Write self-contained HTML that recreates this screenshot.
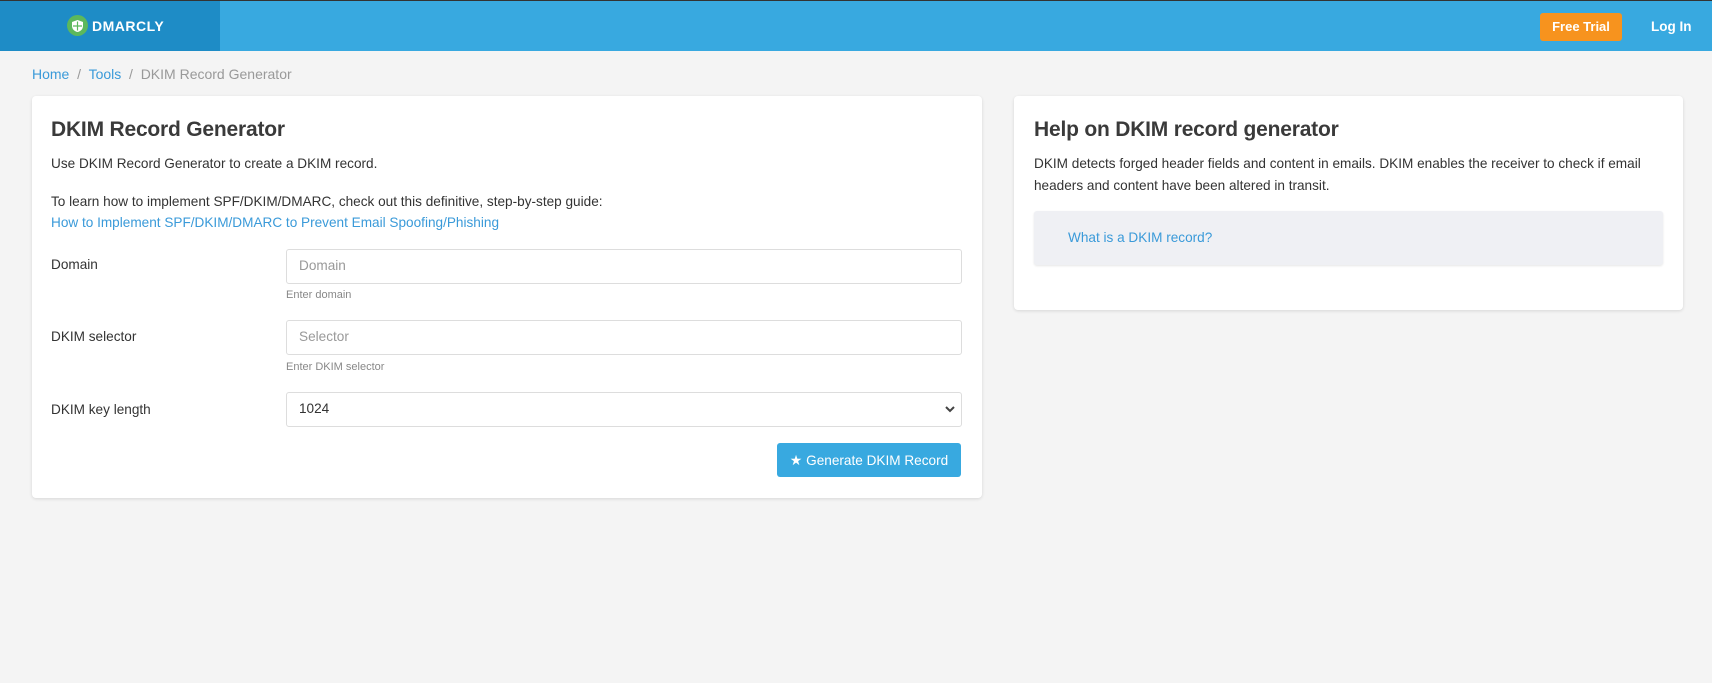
<!DOCTYPE html>
<html><head><meta charset="utf-8"><style>
*{box-sizing:border-box;margin:0;padding:0}
body{width:1712px;height:683px;background:#f4f4f4;font-family:"Liberation Sans",sans-serif;color:#333;position:relative;overflow:hidden}
.hdr{position:absolute;left:0;top:0;width:1712px;height:51px;background:#38a9e0;border-top:1px solid #333}
.hl{position:absolute;left:0;top:0;width:220px;height:50px;background:#1e8cc6}
.logo{position:absolute;left:67px;top:14px;display:flex;align-items:center;color:#fff;font-weight:bold;font-size:14px;letter-spacing:.5px}
.logo .c{width:21px;height:21px;border-radius:50%;background:#5cb85c;margin-right:4px;display:flex;align-items:center;justify-content:center}
.ft{position:absolute;left:1540px;top:12px;width:82px;height:28px;background:#f7931e;border-radius:3px;color:#fff;font-weight:bold;font-size:13px;text-align:center;line-height:28px}
.li{position:absolute;left:1651px;top:18px;color:#fff;font-weight:bold;font-size:13.5px}
.bc{position:absolute;left:32px;top:66px;font-size:14px;color:#999}
.bc a{color:#3a9ad9;text-decoration:none}
.card{position:absolute;background:#fff;border-radius:4px;box-shadow:0 1px 3px rgba(0,0,0,.12)}
h2{position:absolute;font-size:21px;font-weight:bold;color:#3a3a3a;letter-spacing:-0.2px}
.t{position:absolute;font-size:13.6px;color:#333;white-space:nowrap}
.lk{color:#3a9ad9}
.inp{position:absolute;left:254px;width:676px;height:35px;border:1px solid #ddd;border-radius:3px;font-size:13.6px;color:#999;padding:8px 12px}
.sm{position:absolute;left:254px;font-size:11px;color:#888}
.btn{position:absolute;left:745px;top:347px;width:184px;height:34px;background:#38a9e0;border-radius:3px;color:#fff;font-size:13.6px;line-height:34px;text-align:center}
.acc{position:absolute;left:20px;top:115px;width:629px;height:54px;background:#eff0f4;border-radius:3px;box-shadow:0 1px 2px rgba(0,0,0,.1)}
</style></head><body>
<div class="hdr"><div class="hl"><div class="logo"><div class="c"><svg width="11" height="12" viewBox="0 0 11 12"><path d="M5.5 0L0 2v4c0 3 2.5 5.5 5.5 6 3-.5 5.5-3 5.5-6V2z" fill="#fff"/><path d="M5.5 1.5v9M1 6h9" stroke="#5cb85c" stroke-width="1.2"/></svg></div>DMARCLY</div></div>
<div class="ft">Free Trial</div><div class="li">Log In</div></div>
<div class="bc"><a>Home</a> &nbsp;/&nbsp; <a>Tools</a> &nbsp;/&nbsp; DKIM Record Generator</div>
<div class="card" style="left:32px;top:96px;width:950px;height:402px">
<h2 style="left:19px;top:22px">DKIM Record Generator</h2>
<div class="t" style="left:19px;top:60px">Use DKIM Record Generator to create a DKIM record.</div>
<div class="t" style="left:19px;top:98px">To learn how to implement SPF/DKIM/DMARC, check out this definitive, step-by-step guide:</div>
<div class="t lk" style="left:19px;top:119px">How to Implement SPF/DKIM/DMARC to Prevent Email Spoofing/Phishing</div>
<div class="t" style="left:19px;top:161px">Domain</div>
<div class="inp" style="top:153px">Domain</div>
<div class="sm" style="top:193px">Enter domain</div>
<div class="t" style="left:19px;top:233px">DKIM selector</div>
<div class="inp" style="top:224px">Selector</div>
<div class="sm" style="top:265px">Enter DKIM selector</div>
<div class="t" style="left:19px;top:306px">DKIM key length</div>
<div class="inp" style="top:296px;color:#333">1024<svg style="position:absolute;right:6px;top:13px" width="10" height="7" viewBox="0 0 10 7"><path d="M1 1l4 4 4-4" stroke="#444" stroke-width="2" fill="none"/></svg></div>
<div class="btn"><span style="font-size:14px">★</span> Generate DKIM Record</div>
</div>
<div class="card" style="left:1014px;top:96px;width:669px;height:214px">
<h2 style="left:20px;top:22px">Help on DKIM record generator</h2>
<div class="t" style="left:20px;top:60px">DKIM detects forged header fields and content in emails. DKIM enables the receiver to check if email</div>
<div class="t" style="left:20px;top:82px">headers and content have been altered in transit.</div>
<div class="acc"><div class="t lk" style="left:34px;top:19px">What is a DKIM record?</div></div>
</div>
</body></html>
